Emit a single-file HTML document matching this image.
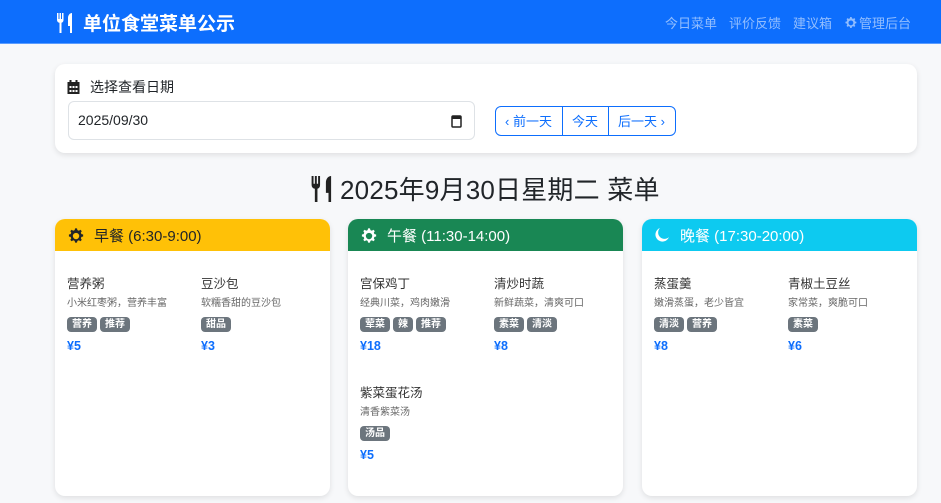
<!DOCTYPE html>
<html><head><meta charset="utf-8"><style>
*{box-sizing:border-box;margin:0;padding:0}
body{width:941px;height:503px;overflow:hidden;background:#f7f8fa;font-family:"Liberation Sans","Noto Sans CJK SC",sans-serif;color:#212529;position:relative}
.nav{position:absolute;left:0;top:0;width:941px;height:44px;background:#0d6efd;border-bottom:1px solid #5a9cff}
.brand{position:absolute;left:56px;top:9px;color:#fff;font-size:19px;font-weight:bold;display:flex;align-items:center;gap:9px}
.links{position:absolute;right:30px;top:13px;font-size:13px;color:rgba(255,255,255,.55);display:flex;gap:12px;align-items:center}
.date{position:absolute;left:55px;top:64px;width:862px;height:89px;background:#fff;border-radius:10px;box-shadow:0 2px 6px rgba(0,0,0,.1)}
.lbl{position:absolute;left:12px;top:13px;font-size:14px;display:flex;align-items:center;gap:10px}
.inp{position:absolute;left:13px;top:37px;width:407px;height:39px;border:1px solid #dee2e6;border-radius:6px;font-size:14px;padding:10px 9px}
.btns{position:absolute;left:440px;top:42px;height:30px;border:1px solid #0d6efd;border-radius:6px;display:flex;font-size:13px;color:#0d6efd}
.btns div{padding:6px 10px 6px 9px;border-right:1px solid #0d6efd;line-height:17px}
.btns div:last-child{border-right:none}
.title{position:absolute;left:310px;top:170px;font-size:26px;letter-spacing:.2px;display:flex;align-items:center;gap:6px;white-space:nowrap}
.card{position:absolute;top:219px;width:275px;height:277px;background:#fff;border-radius:10px;box-shadow:0 2px 6px rgba(0,0,0,.1);overflow:hidden}
.hd{height:32px;display:flex;align-items:center;padding-left:12px;gap:10px;font-size:15px}
.item{position:absolute;width:134px}
.n{font-size:12.5px;color:#333}
.d{font-size:10px;color:#666;margin-top:2px}
.b{margin-top:8px;display:flex;gap:3px}
.b span{background:#6c757d;color:#fff;font-size:10px;font-weight:bold;border-radius:4px;padding:1px 5px;line-height:13px}
.p{color:#0d6efd;font-weight:bold;font-size:12.5px;margin-top:7px}
</style></head><body>
<svg width="0" height="0" style="position:absolute"><defs><symbol id="g" viewBox="0 0 16 16"><path d="M9.4 1.3l.4 1.6 1.4.6 1.4-.9 1.3 1.3-.9 1.4.6 1.4 1.6.4v1.8l-1.6.4-.6 1.4.9 1.4-1.3 1.3-1.4-.9-1.4.6-.4 1.6H7.6l-.4-1.6-1.4-.6-1.4.9-1.3-1.3.9-1.4-.6-1.4-1.6-.4V7.1l1.6-.4.6-1.4-.9-1.4 1.3-1.3 1.4.9 1.4-.6.4-1.6zM8.5 5.5a3 3 0 1 0 0 6 3 3 0 0 0 0-6z" fill-rule="evenodd"/></symbol></defs></svg>
<div class="nav">
<div class="brand"><svg width="18" height="20" viewBox="0 0 18 20" fill="#fff"><path d="M1 0h1.5v6h1V0H5v6h1V0h1.5v7a3 3 0 0 1-2 2.8V20h-2V9.8A3 3 0 0 1 1 7z"/><path d="M16 0v20h-2v-7h-2V5c0-3 2-5 4-5z"/></svg>单位食堂菜单公示</div>
<div class="links"><span>今日菜单</span><span>评价反馈</span><span>建议箱</span><span style="display:flex;align-items:center;gap:2px"><svg width="13" height="13" fill="rgba(255,255,255,.55)"><use href="#g"/></svg>管理后台</span></div>
</div>
<div class="date">
<div class="lbl"><svg width="13" height="14" viewBox="0 0 12 14" fill="#222"><rect x="2" y="0" width="2" height="3"/><rect x="8" y="0" width="2" height="3"/><path d="M0 2h12v12H0z"/><g fill="#fff"><rect x="2" y="6" width="2" height="2"/><rect x="5" y="6" width="2" height="2"/><rect x="8" y="6" width="2" height="2"/><rect x="2" y="10" width="2" height="2"/><rect x="5" y="10" width="2" height="2"/><rect x="8" y="10" width="2" height="2"/></g></svg>选择查看日期</div>
<div class="inp">2025/09/30<svg style="position:absolute;right:12px;top:12px" width="11" height="14" viewBox="0 0 11 14"><rect x="1" y="2" width="9" height="11" rx="1" fill="none" stroke="#222" stroke-width="1.5"/><rect x="1" y="2" width="9" height="3" fill="#222"/></svg></div>
<div class="btns"><div>‹ 前一天</div><div>今天</div><div>后一天 ›</div></div>
</div>
<div class="title"><svg width="24" height="26" viewBox="0 0 18 20" fill="#222"><path d="M1 0h1.5v6h1V0H5v6h1V0h1.5v7a3 3 0 0 1-2 2.8V20h-2V9.8A3 3 0 0 1 1 7z"/><path d="M16 0v20h-2v-7h-2V5c0-3 2-5 4-5z"/></svg>2025年9月30日星期二 菜单</div>

<div class="card" style="left:55px">
<div class="hd" style="background:#ffc107;color:#212529"><svg width="17" height="17" fill="#212529"><use href="#g"/></svg>早餐 (6:30-9:00)</div>
<div class="item" style="left:12px;top:54px"><div class="n">营养粥</div><div class="d">小米红枣粥，营养丰富</div><div class="b"><span>营养</span><span>推荐</span></div><div class="p">¥5</div></div>
<div class="item" style="left:146px;top:54px"><div class="n">豆沙包</div><div class="d">软糯香甜的豆沙包</div><div class="b"><span>甜品</span></div><div class="p">¥3</div></div>
</div>

<div class="card" style="left:348px">
<div class="hd" style="background:#198754;color:#fff"><svg width="17" height="17" fill="#fff"><use href="#g"/></svg>午餐 (11:30-14:00)</div>
<div class="item" style="left:12px;top:54px"><div class="n">宫保鸡丁</div><div class="d">经典川菜，鸡肉嫩滑</div><div class="b"><span>荤菜</span><span>辣</span><span>推荐</span></div><div class="p">¥18</div></div>
<div class="item" style="left:146px;top:54px"><div class="n">清炒时蔬</div><div class="d">新鲜蔬菜，清爽可口</div><div class="b"><span>素菜</span><span>清淡</span></div><div class="p">¥8</div></div>
<div class="item" style="left:12px;top:163px"><div class="n">紫菜蛋花汤</div><div class="d">清香紫菜汤</div><div class="b"><span>汤品</span></div><div class="p">¥5</div></div>
</div>

<div class="card" style="left:642px">
<div class="hd" style="background:#0dcaf0;color:#fff"><svg width="16" height="16" viewBox="0 0 16 16" fill="#fff"><path d="M6 1a7 7 0 1 0 9 9A6 6 0 0 1 6 1z"/></svg>晚餐 (17:30-20:00)</div>
<div class="item" style="left:12px;top:54px"><div class="n">蒸蛋羹</div><div class="d">嫩滑蒸蛋，老少皆宜</div><div class="b"><span>清淡</span><span>营养</span></div><div class="p">¥8</div></div>
<div class="item" style="left:146px;top:54px"><div class="n">青椒土豆丝</div><div class="d">家常菜，爽脆可口</div><div class="b"><span>素菜</span></div><div class="p">¥6</div></div>
</div>
</body></html>
